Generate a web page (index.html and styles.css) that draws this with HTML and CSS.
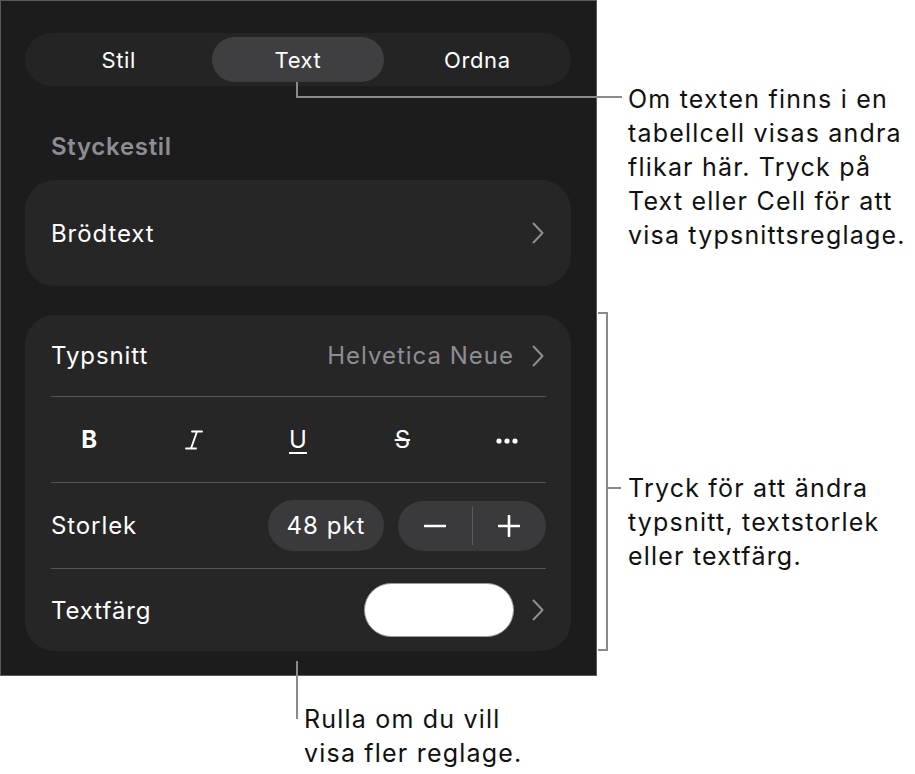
FILE: index.html
```html
<!DOCTYPE html>
<html lang="sv">
<head>
<meta charset="utf-8">
<title>Text</title>
<link rel="stylesheet" href="styles.css">
</head>
<body>
<div class="stage">
  <div class="panel">
    <div class="seg">
      <div class="seg-item">Stil</div>
      <div class="seg-item active">Text</div>
      <div class="seg-item">Ordna</div>
    </div>
    <div class="section-title">Styckestil</div>
    <div class="card">
      <div class="row row-single">
        <span class="label">Brödtext</span>
        <svg class="chev" width="12" height="22" viewBox="0 0 12 22"><path d="M1.5 1.5 L10.5 11 L1.5 20.5" fill="none" stroke="#8e8e93" stroke-width="2" stroke-linecap="round" stroke-linejoin="round"/></svg>
      </div>
    </div>
    <div class="card group">
      <div class="row r1">
        <span class="label">Typsnitt</span>
        <span class="value">Helvetica Neue</span>
        <svg class="chev" width="12" height="22" viewBox="0 0 12 22"><path d="M1.5 1.5 L10.5 11 L1.5 20.5" fill="none" stroke="#8e8e93" stroke-width="2" stroke-linecap="round" stroke-linejoin="round"/></svg>
      </div>
      <div class="sep"></div>
      <div class="row styles">
        <span class="st st-b">B</span>
        <span class="st st-i"><svg width="18" height="20" viewBox="0 0 18 20"><path d="M7 1.5 H17 M1 18.5 H11 M12 1.5 L6 18.5" fill="none" stroke="#fff" stroke-width="1.9" stroke-linecap="round"/></svg></span>
        <span class="st st-u">U</span>
        <span class="st st-s">S</span>
        <span class="st st-more"><svg width="22" height="6" viewBox="0 0 22 6"><circle cx="3" cy="3" r="2.6" fill="#fff"/><circle cx="11" cy="3" r="2.6" fill="#fff"/><circle cx="19" cy="3" r="2.6" fill="#fff"/></svg></span>
      </div>
      <div class="sep"></div>
      <div class="row r3">
        <span class="label">Storlek</span>
        <span class="size-pill">48 pkt</span>
        <div class="stepper">
          <span class="step"><svg width="22" height="4" viewBox="0 0 22 4"><path d="M1 2 H21" stroke="#fff" stroke-width="2.6" stroke-linecap="round"/></svg></span>
          <span class="step-div"></span>
          <span class="step"><svg width="22" height="22" viewBox="0 0 22 22"><path d="M1 11 H21 M11 1 V21" stroke="#fff" stroke-width="2.6" stroke-linecap="round"/></svg></span>
        </div>
      </div>
      <div class="sep"></div>
      <div class="row r4">
        <span class="label">Textfärg</span>
        <span class="swatch"></span>
        <svg class="chev" width="12" height="22" viewBox="0 0 12 22"><path d="M1.5 1.5 L10.5 11 L1.5 20.5" fill="none" stroke="#8e8e93" stroke-width="2" stroke-linecap="round" stroke-linejoin="round"/></svg>
      </div>
    </div>
  </div>

  <svg class="leaders" width="915" height="774" viewBox="0 0 915 774">
    <polyline points="297,82 297,97 622,97" fill="none" stroke="#8a8a8a" stroke-width="2"/>
    <polyline points="598,313 607,313 607,650 598,650" fill="none" stroke="#8a8a8a" stroke-width="2"/>
    <line x1="607" y1="488" x2="621" y2="488" stroke="#8a8a8a" stroke-width="2"/>
    <line x1="297" y1="661" x2="297" y2="719" stroke="#8a8a8a" stroke-width="2"/>
  </svg>

  <p class="callout c1">Om texten finns i en<br>tabellcell visas andra<br>flikar här. Tryck på<br>Text eller Cell för att<br>visa typsnittsreglage.</p>
  <p class="callout c2">Tryck för att ändra<br>typsnitt, textstorlek<br>eller textfärg.</p>
  <p class="callout c3">Rulla om du vill<br>visa fler reglage.</p>
</div>
</body>
</html>
```

FILE: styles.css
```css
* { box-sizing: border-box; }
html, body { margin: 0; padding: 0; background: #fff; }
body { font-family: Inter, "Noto Sans", sans-serif; }

.stage {
  position: relative;
  width: 915px;
  height: 774px;
}

.panel {
  width: 597px;
  height: 676px;
  background: #1c1c1c;
  border: 1px solid #5a5a5a;
  padding: 32px 25px 0 24px;
  color: #fff;
}

.seg {
  height: 53px;
  border-radius: 27px;
  background: #242424;
  padding: 4px;
  display: grid;
  grid-template-columns: 1fr 1fr 1fr;
}
.seg-item {
  display: flex;
  align-items: center;
  justify-content: center;
  font-size: 22px;
  font-weight: 400;
  letter-spacing: 0.6px;
  border-radius: 23px;
}
.seg-item.active {
  background: #3f3f41;
  margin: 0 4px;
}

.section-title {
  margin: 46px 0 19px 26px;
  font-size: 24px;
  line-height: 29px;
  font-weight: 600;
  color: #8d8d92;
  letter-spacing: 0.7px;
}

.card {
  background: #262626;
  border-radius: 30px;
}
.card + .card { margin-top: 29px; }

.row {
  display: flex;
  align-items: center;
  padding: 0 27px 0 26px;
}
.label {
  font-size: 24px;
  letter-spacing: 0.9px;
  flex: 1;
}
.row-single { height: 106px; }
.r1 { height: 81px; }
.styles { height: 85px; padding: 0 12px; display: grid; grid-template-columns: repeat(5, 1fr); }
.r3 { height: 85px; padding-right: 25px; }
.r4 { height: 82px; }

.sep {
  height: 1px;
  margin: 0 25px 0 26px;
  background: #545456;
}

.value {
  font-size: 24px;
  letter-spacing: 1px;
  color: #8d8d92;
  margin-right: 18px;
}
.chev { display: block; flex: none; }

.st {
  display: flex;
  align-items: center;
  justify-content: center;
  font-size: 24px;
  color: #fff;
}
.st-b { font-weight: 700; }
.st-u { text-decoration: underline; text-underline-offset: 4px; text-decoration-thickness: 2px; font-weight: 400; }
.st-s { text-decoration: line-through; text-decoration-thickness: 2px; }
.st-more { padding-top: 2px; }

.size-pill {
  width: 116px;
  height: 51px;
  border-radius: 26px;
  background: #3a3a3c;
  display: flex;
  align-items: center;
  justify-content: center;
  font-size: 24px;
  letter-spacing: 1px;
  margin-right: 14px;
}
.stepper {
  width: 148px;
  height: 50px;
  border-radius: 25px;
  background: #3a3a3c;
  display: flex;
  align-items: center;
}
.step {
  flex: 1;
  display: flex;
  align-items: center;
  justify-content: center;
}
.step-div {
  width: 1px;
  height: 38px;
  background: #5c5c5e;
}

.swatch {
  width: 150px;
  height: 54px;
  border-radius: 27px;
  background: #fff;
  border: 1.5px solid #9a9a9a;
  margin-right: 18px;
}

.leaders {
  position: absolute;
  left: 0;
  top: 0;
  pointer-events: none;
}

.callout {
  position: absolute;
  margin: 0;
  font-size: 25px;
  line-height: 34px;
  color: #111;
  letter-spacing: 1.2px;
}
.c1 { left: 628px; top: 82px; }
.c2 { left: 628px; top: 471px; }
.c3 { left: 304px; top: 702px; }
```
